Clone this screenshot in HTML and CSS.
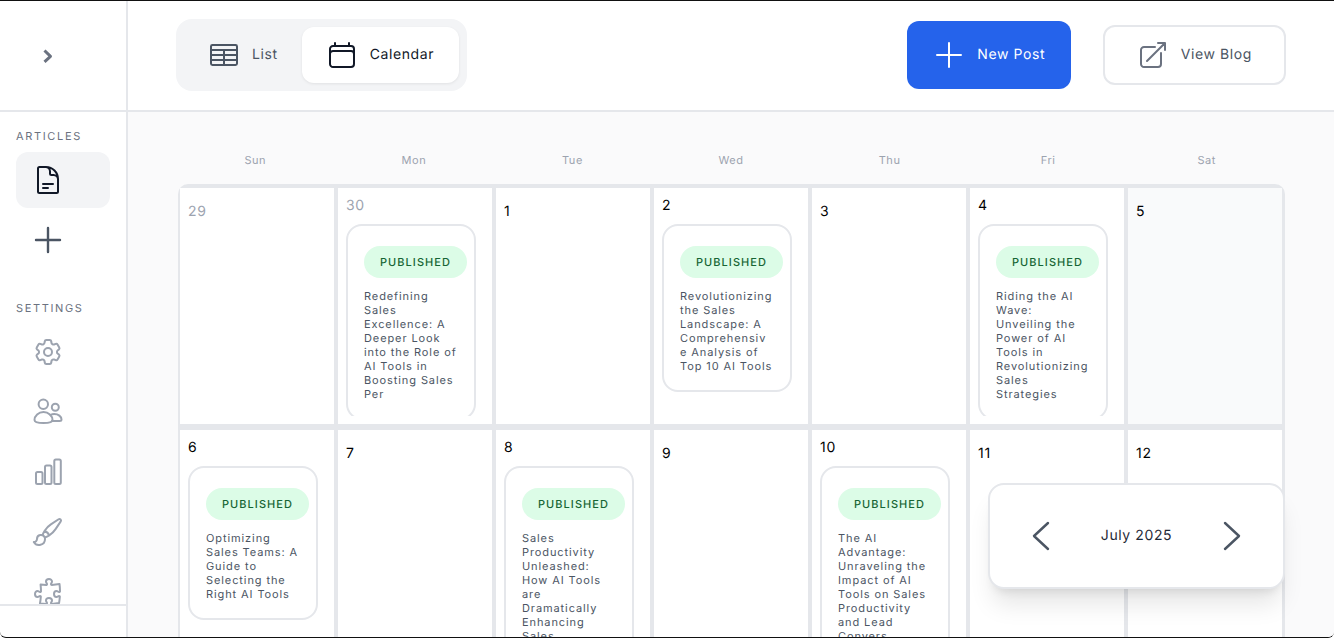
FILE: index.html
```html
<!DOCTYPE html>
<html lang="en">
<head>
<meta charset="utf-8">
<title>Articles Calendar</title>
<link rel="stylesheet" href="styles.css">
</head>
<body>
<div class="app">
  <aside class="sidebar">
    <div class="side-top">
      <svg class="chev" viewBox="0 0 16 16"><path d="M4.500 3.500 10.500 9.300l-6 5.500"/></svg>
    </div>
    <nav class="side-nav">
      <div class="side-label">ARTICLES</div>
      <a class="side-item active">
        <svg class="ico" viewBox="0 0 24 24"><path d="M19.500 14.250v-2.625a3.375 3.375 0 0 0-3.375-3.375h-1.500A1.125 1.125 0 0 1 13.500 7.125v-1.500a3.375 3.375 0 0 0-3.375-3.375H8.250m0 12.750h7.500m-7.500 3H12M10.500 2.250H5.625c-.621 0-1.125.504-1.125 1.125v17.250c0 .621.504 1.125 1.125 1.125h12.750c.621 0 1.125-.504 1.125-1.125V11.250a9 9 0 0 0-9-9z"/></svg>
      </a>
      <a class="side-item dark">
        <svg class="ico" viewBox="0 0 24 24"><path d="M12 3v18M3 12h18"/></svg>
      </a>
      <div class="side-label second">SETTINGS</div>
      <a class="side-item">
        <svg class="ico" viewBox="0 0 24 24"><path d="M9.594 3.940c.09-.542.56-.94 1.110-.94h2.593c.55 0 1.020.398 1.110.94l.213 1.281c.063.374.313.686.645.870.074.04.147.083.22.127.325.196.72.257 1.075.124l1.217-.456a1.125 1.125 0 0 1 1.370.49l1.296 2.247a1.125 1.125 0 0 1-.26 1.431l-1.003.827c-.293.241-.438.613-.43.992a7.723 7.723 0 0 1 0 .255c-.008.378.137.75.43.991l1.004.827c.424.35.534.955.26 1.430l-1.298 2.247a1.125 1.125 0 0 1-1.369.491l-1.217-.456c-.355-.133-.75-.072-1.076.124a6.470 6.470 0 0 1-.22.128c-.331.183-.581.495-.644.869l-.213 1.281c-.09.543-.56.94-1.110.94h-2.594c-.55 0-1.019-.398-1.110-.94l-.213-1.281c-.062-.374-.312-.686-.644-.87a6.520 6.520 0 0 1-.22-.127c-.325-.196-.72-.257-1.076-.124l-1.217.456a1.125 1.125 0 0 1-1.369-.49l-1.297-2.247a1.125 1.125 0 0 1 .26-1.431l1.004-.827c.292-.24.437-.613.43-.991a6.932 6.932 0 0 1 0-.255c.007-.38-.138-.751-.43-.992l-1.004-.827a1.125 1.125 0 0 1-.26-1.430l1.297-2.247a1.125 1.125 0 0 1 1.370-.491l1.216.456c.356.133.751.072 1.076-.124.072-.044.146-.086.22-.128.332-.183.582-.495.644-.869l.214-1.280z"/><path d="M15 12a3 3 0 1 1-6 0 3 3 0 0 1 6 0z"/></svg>
      </a>
      <a class="side-item">
        <svg class="ico thin" viewBox="0 0 32 32"><circle cx="11.300" cy="8.300" r="4.700"/><circle cx="23.300" cy="11.300" r="3.500"/><path d="M2.500 24c0-4.300 4-8 9-8s9 3.700 9 8c0 1.900-4 3-9 3s-9-1.100-9-3z"/><path d="M18.500 19c1-.6 2.500-1 3.800-1 4 0 7.200 2.500 7.200 5.500 0 1-.8 1.500-2 1.500h-7.700"/></svg>
      </a>
      <a class="side-item">
        <svg class="ico thin" viewBox="0 0 32 32"><rect x="4" y="16" width="6.500" height="12" rx="1.500"/><rect x="13" y="9.500" width="6.500" height="18.500" rx="1.500"/><rect x="22.300" y="3.500" width="6.500" height="24.500" rx="1.500"/></svg>
      </a>
      <a class="side-item">
        <svg class="ico" viewBox="0 0 24 24"><path d="M9.530 16.122a3 3 0 0 0-5.780 1.128 2.250 2.250 0 0 1-2.400 2.245 4.500 4.500 0 0 0 8.400-2.245c0-.399-.078-.78-.22-1.128zm0 0a15.998 15.998 0 0 0 3.388-1.620m-5.043-.025a15.994 15.994 0 0 1 1.622-3.395m3.420 3.420a15.995 15.995 0 0 0 4.764-4.648l3.876-5.814a1.151 1.151 0 0 0-1.597-1.597L14.146 6.320a15.996 15.996 0 0 0-4.649 4.763m3.420 3.420a6.776 6.776 0 0 0-3.420-3.420"/></svg>
      </a>
      <a class="side-item">
        <svg class="ico" viewBox="0 0 24 24"><path d="M14.250 6.087c0-.355.186-.676.401-.959.221-.29.349-.634.349-1.003 0-1.036-1.007-1.875-2.250-1.875s-2.250.84-2.250 1.875c0 .369.128.713.349 1.003.215.283.401.604.401.959a.64.64 0 0 1-.657.643 48.390 48.390 0 0 1-4.163-.3c.186 1.613.293 3.250.315 4.907a.656.656 0 0 1-.658.663c-.355 0-.676-.186-.959-.401a1.647 1.647 0 0 0-1.003-.349c-1.036 0-1.875 1.007-1.875 2.250s.84 2.250 1.875 2.250c.369 0 .713-.128 1.003-.349.283-.215.604-.401.959-.401.31 0 .555.26.532.57a48.039 48.039 0 0 1-.642 5.056c1.518.19 3.058.309 4.616.354a.64.64 0 0 0 .657-.643c0-.355-.186-.676-.401-.959a1.647 1.647 0 0 1-.349-1.003c0-1.035 1.008-1.875 2.250-1.875 1.243 0 2.250.84 2.250 1.875 0 .369-.128.713-.349 1.003-.215.283-.4.604-.4.959 0 .333.277.599.61.58a48.100 48.100 0 0 0 5.427-.63 48.050 48.050 0 0 0 .582-4.717.532.532 0 0 0-.533-.57c-.355 0-.676.186-.959.401-.29.221-.634.349-1.003.349-1.035 0-1.875-1.007-1.875-2.250s.84-2.250 1.875-2.250c.37 0 .713.128 1.003.349.283.215.604.401.96.401a.656.656 0 0 0 .658-.663 48.422 48.422 0 0 0-.37-5.360c-1.886.342-3.810.574-5.766.689a.578.578 0 0 1-.61-.58z"/></svg>
      </a>
    </nav>
    <div class="side-foot"></div>
  </aside>

  <div class="content">
    <header class="topbar">
      <div class="toggle">
        <div class="tab">
          <svg class="ico" viewBox="0 0 24 24"><rect x="2.250" y="4.500" width="19.500" height="15" rx="1.100"/><path d="M2.250 8.250h19.500M2.250 12h19.500M2.250 15.750h19.500M12 8.250V19.500"/></svg>
          <span>List</span>
        </div>
        <div class="tab on">
          <svg class="ico" viewBox="0 0 24 24"><path d="M6.750 3v2.250M17.250 3v2.250M3 18.750V7.500a2.250 2.250 0 0 1 2.250-2.250h13.500A2.250 2.250 0 0 1 21 7.500v11.250m-18 0A2.250 2.250 0 0 0 5.250 21h13.500A2.250 2.250 0 0 0 21 18.750m-18 0v-7.500A2.250 2.250 0 0 1 5.250 9h13.500A2.250 2.250 0 0 1 21 11.250v7.500"/></svg>
          <span>Calendar</span>
        </div>
      </div>
      <div class="actions">
        <a class="btn primary">
          <svg class="ico" viewBox="0 0 24 24"><path d="M12 3v18M3 12h18"/></svg>
          <span>New Post</span>
        </a>
        <a class="btn outline">
          <svg class="ico" viewBox="0 0 24 24"><path d="M13.500 6H5.250A2.250 2.250 0 0 0 3 8.250v10.500A2.250 2.250 0 0 0 5.250 21h10.500A2.250 2.250 0 0 0 18 18.750V10.500m-10.500 6L21 3m0 0h-5.250M21 3v5.250"/></svg>
          <span>View Blog</span>
        </a>
      </div>
    </header>

    <main class="main">
      <div class="weekdays">
        <div>Sun</div><div>Mon</div><div>Tue</div><div>Wed</div><div>Thu</div><div>Fri</div><div>Sat</div>
      </div>
      <div class="grid">
        <div class="cell"><div class="num muted">29</div></div>
        <div class="cell has"><div class="num muted">30</div>
          <div class="posts"><article class="post"><span class="badge">PUBLISHED</span><p>Redefining Sales Excellence: A Deeper Look into the Role of AI Tools in Boosting Sales Per</p></article></div>
        </div>
        <div class="cell"><div class="num">1</div></div>
        <div class="cell has"><div class="num">2</div>
          <div class="posts"><article class="post"><span class="badge">PUBLISHED</span><p>Revolutionizing the Sales Landscape: A Comprehensive Analysis of Top 10 AI Tools</p></article></div>
        </div>
        <div class="cell"><div class="num">3</div></div>
        <div class="cell has"><div class="num">4</div>
          <div class="posts"><article class="post"><span class="badge">PUBLISHED</span><p>Riding the AI Wave: Unveiling the Power of AI Tools in Revolutionizing Sales Strategies</p></article></div>
        </div>
        <div class="cell shade"><div class="num">5</div></div>

        <div class="cell has"><div class="num">6</div>
          <div class="posts"><article class="post"><span class="badge">PUBLISHED</span><p>Optimizing Sales Teams: A Guide to Selecting the Right AI Tools</p></article></div>
        </div>
        <div class="cell"><div class="num">7</div></div>
        <div class="cell has"><div class="num">8</div>
          <div class="posts"><article class="post"><span class="badge">PUBLISHED</span><p>Sales Productivity Unleashed: How AI Tools are Dramatically Enhancing Sales</p></article></div>
        </div>
        <div class="cell"><div class="num">9</div></div>
        <div class="cell has"><div class="num">10</div>
          <div class="posts"><article class="post"><span class="badge">PUBLISHED</span><p>The AI Advantage: Unraveling the Impact of AI Tools on Sales Productivity and Lead Convers</p></article></div>
        </div>
        <div class="cell"><div class="num">11</div></div>
        <div class="cell"><div class="num">12</div></div>
      </div>
    </main>
  </div>

  <div class="month">
    <svg class="mchev" viewBox="0 0 24 32"><path d="M19 3 5 16l14 13"/></svg>
    <span>July 2025</span>
    <svg class="mchev" viewBox="0 0 24 32"><path d="M5 3l14 13L5 29"/></svg>
  </div>
</div>
</body>
</html>
```
FILE: styles.css
```css
* { box-sizing: border-box; }
html, body { margin: 0; padding: 0; height: 100%; overflow: hidden; background: #fff; }
body {
  font-family: "Inter", "Liberation Sans", sans-serif;
  text-rendering: geometricPrecision;
}

.app {
  position: relative;
  display: flex;
  height: 638px;
  border-top: 1px solid #111;
  border-bottom: 1px solid #111;
  border-radius: 0 0 6px 6px;
  overflow: hidden;
  background: #fff;
}

.ico {
  width: 32px;
  height: 32px;
  flex: none;
  fill: none;
  stroke: currentColor;
  stroke-width: 1.5;
  stroke-linecap: round;
  stroke-linejoin: round;
}
.ico.thin { stroke-width: 2; }

/* sidebar */
.sidebar {
  width: 128px;
  flex: none;
  display: flex;
  flex-direction: column;
  border-right: 2px solid #e5e7eb;
}
.side-top {
  height: 111px;
  flex: none;
  display: flex;
  align-items: center;
  padding: 0 0 1px 40px;
  border-bottom: 2px solid #e5e7eb;
}
.chev {
  width: 16px;
  height: 16px;
  fill: none;
  stroke: #6b7280;
  stroke-width: 3;
  stroke-linejoin: round;
  overflow: visible;
}
.side-nav {
  flex: 1;
  min-height: 0;
  overflow: hidden;
  padding: 16px 16px 0;
}
.side-label {
  height: 16px;
  margin-bottom: 8px;
  font-size: 11px;
  line-height: 16px;
  letter-spacing: 1.65px;
  color: #6b7280;
}
.side-label.second { margin-top: 32px; }
.side-item {
  display: flex;
  align-items: center;
  height: 56px;
  margin-bottom: 4px;
  padding-left: 16px;
  border-radius: 12px;
  color: #9ca3af;
}
.side-item.active { background: #f3f4f6; color: #111827; }
.side-item.dark { color: #4b5563; }
.side-item.dark .ico { stroke-width: 1.8; }
.side-foot {
  height: 33px;
  flex: none;
  border-top: 2px solid #e5e7eb;
}

/* top bar */
.content {
  flex: 1;
  min-width: 0;
  display: flex;
  flex-direction: column;
}
.topbar {
  height: 111px;
  flex: none;
  display: flex;
  align-items: center;
  justify-content: space-between;
  padding: 0 48px 1px;
  border-bottom: 2px solid #e5e7eb;
  background: #fff;
}
.toggle {
  display: flex;
  height: 72px;
  padding: 8px;
  border-radius: 16px;
  background: #f3f4f6;
}
.tab {
  display: flex;
  align-items: center;
  gap: 12px;
  padding: 0 24px;
  border-radius: 12px;
  font-size: 14px;
  letter-spacing: 0.6px;
  color: #4b5563;
}
.tab span, .btn span { padding-bottom: 2px; }
.tab.on {
  width: 157px;
  background: #fff;
  color: #111827;
  box-shadow: 0 1px 3px rgba(0, 0, 0, 0.08);
}
.actions { display: flex; align-items: center; gap: 32px; }
.btn {
  display: flex;
  align-items: center;
  gap: 12px;
  border-radius: 12px;
  font-size: 14px;
  letter-spacing: 0.6px;
}
.btn.primary {
  height: 68px;
  padding: 0 25.5px 0 26px;
  background: #2563eb;
  color: #fff;
}
.btn.outline {
  height: 60px;
  padding: 0 32px;
  border: 2px solid #e5e7eb;
  background: #fff;
  color: #4b5563;
}
.btn.outline .ico { color: #6b7280; }

/* calendar */
.main {
  flex: 1;
  min-height: 0;
  overflow: hidden;
  padding: 40px 48px 0;
  background: #fafafb;
}
.weekdays {
  display: grid;
  grid-template-columns: repeat(7, 1fr);
  margin-bottom: 16px;
  font-size: 11px;
  line-height: 16px;
  letter-spacing: 0.05em;
  text-align: center;
  color: #9ca3af;
}
.grid {
  display: grid;
  grid-template-columns: repeat(7, 154px);
  grid-auto-rows: 236px;
  column-gap: 4px;
  row-gap: 6px;
  width: 1107px;
  margin-left: 2px;
  padding: 4px 3px 4px 2px;
  border-radius: 10px 10px 0 0;
  background: #e5e7eb;
}
.cell {
  display: flex;
  flex-direction: column;
  min-height: 0;
  padding: 14px 16px 8px 8px;
  background: #fff;
}
.cell.has { padding-top: 8px; }
.cell.shade { background: #f9fafb; }
.num {
  flex: none;
  font-size: 14px;
  line-height: 20px;
  letter-spacing: 0.05em;
  color: #000;
}
.num.muted { color: #9ca3af; }
.posts {
  flex: 1;
  min-height: 0;
  overflow: hidden;
  margin-top: 8px;
}
.post {
  padding: 20px 16px 17px;
  border: 2px solid #e5e7eb;
  border-radius: 16px;
  background: #fff;
}
.badge {
  display: inline-block;
  height: 32px;
  padding: 0 16px;
  border-radius: 16px;
  background: #dcfce7;
  color: #166534;
  font-size: 11px;
  font-weight: 500;
  line-height: 32px;
  letter-spacing: 1.05px;
  white-space: nowrap;
}
.post p {
  margin: 11px 1px 0 0;
  font-size: 11px;
  line-height: 14px;
  letter-spacing: 0.9px;
  color: #4b5563;
  overflow-wrap: anywhere;
}

/* month switcher, floating over the grid */
.month {
  position: absolute;
  right: 49px;
  bottom: 48px;
  width: 297px;
  height: 106px;
  display: flex;
  align-items: center;
  justify-content: space-between;
  padding: 0 39px;
  border: 2px solid #e5e7eb;
  border-radius: 16px;
  background: #fff;
  box-shadow: 0 20px 25px -5px rgba(0, 0, 0, 0.1), 0 8px 10px -6px rgba(0, 0, 0, 0.1);
  font-size: 14px;
  letter-spacing: 0.6px;
  color: #1f2937;
}
.month span { padding-bottom: 2px; }
.mchev {
  width: 24px;
  height: 32px;
  fill: none;
  stroke: #4b5563;
  stroke-width: 2.4;
  stroke-linecap: round;
  stroke-linejoin: round;
}
```
